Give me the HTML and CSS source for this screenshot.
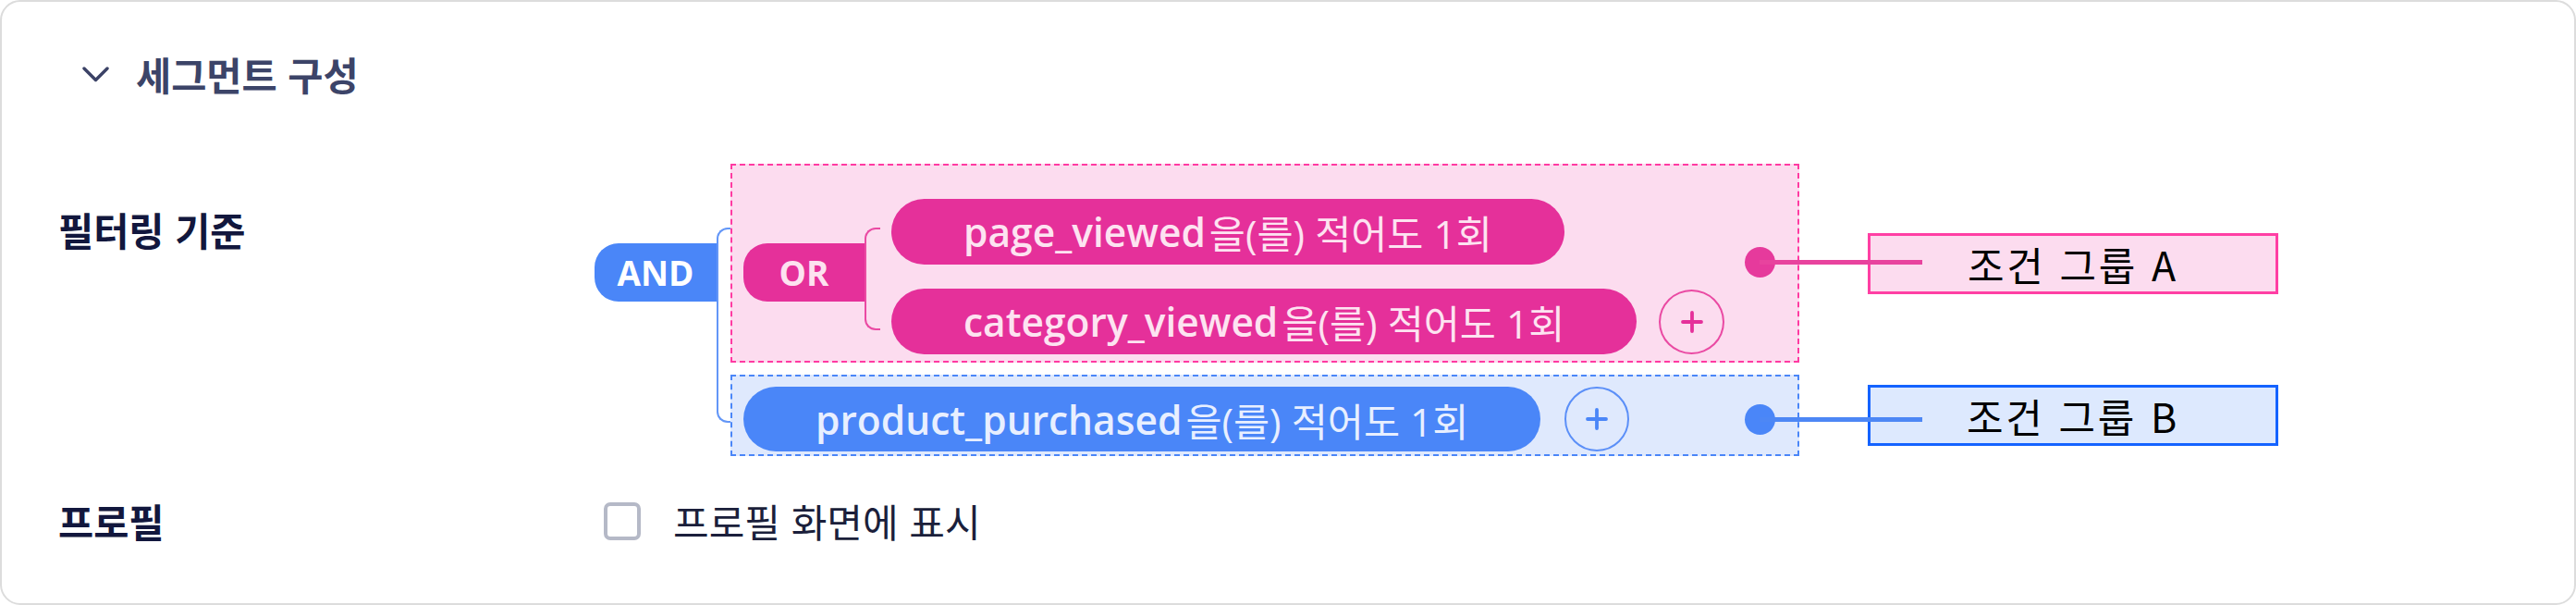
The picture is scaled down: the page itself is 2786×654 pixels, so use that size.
FILE: index.html
```html
<!DOCTYPE html>
<html lang="ko">
<head>
<meta charset="utf-8">
<title>세그먼트 구성</title>
<link rel="stylesheet" href="styles.css">
</head>
<body>
<section class="card">
  <header class="header">
    <svg class="chevron" width="29" height="17" viewBox="0 0 29 17"><polyline points="2,2 14.5,14.5 27,2" fill="none" stroke="#3b4266" stroke-width="3.4" stroke-linecap="round" stroke-linejoin="round"/></svg>
    <h2 class="title">세그먼트 구성</h2>
  </header>

  <div class="row filter-row">
    <div class="label filter-label">필터링 기준</div>
    <div class="diagram">
      <div class="op op-and">AND</div>
      <div class="bracket bracket-and"></div>
      <div class="groups">
        <div class="group-row">
          <div class="group group-a">
            <div class="op op-or">OR</div>
            <div class="bracket bracket-or"></div>
            <div class="pills">
              <div class="pill-row"><div class="pill pill-pink"><span class="ev">page_viewed</span><span class="cond">을(를) 적어도 1회</span></div></div>
              <div class="pill-row"><div class="pill pill-pink"><span class="ev">category_viewed</span><span class="cond">을(를) 적어도 1회</span></div>
                <div class="add add-pink"><svg width="24" height="24" viewBox="0 0 24 24"><path d="M12 2v20M2 12h20" stroke="currentColor" stroke-width="3.8" stroke-linecap="round"/></svg></div>
              </div>
            </div>
            <div class="dot dot-a"></div>
          </div>
          <div class="tag tag-a">조건 그룹 A</div>
        </div>
        <div class="group-row">
          <div class="group group-b">
            <div class="pill pill-blue"><span class="ev">product_purchased</span><span class="cond">을(를) 적어도 1회</span></div>
            <div class="add add-blue"><svg width="24" height="24" viewBox="0 0 24 24"><path d="M12 2v20M2 12h20" stroke="currentColor" stroke-width="3.8" stroke-linecap="round"/></svg></div>
            <div class="dot dot-b"></div>
          </div>
          <div class="tag tag-b">조건 그룹 B</div>
        </div>
      </div>
    </div>
  </div>

  <div class="row profile-row">
    <div class="label">프로필</div>
    <label class="check"><span class="box"></span><span class="check-text">프로필 화면에 표시</span></label>
  </div>
</section>
</body>
</html>
```

FILE: styles.css
```css
* { box-sizing: border-box; }
html, body { margin: 0; padding: 0; background: #ffffff; }
body { font-family: "Open Sans", "Noto Sans CJK KR", sans-serif; }

.card {
  width: 2786px;
  height: 654px;
  border: 2px solid #dcdcdc;
  border-radius: 22px;
  background: #fff;
  padding-left: 61px;
  overflow: hidden;
}

.header {
  height: 156px;
  display: flex;
  align-items: center;
  padding-left: 26px;
  gap: 29px;
}
.chevron { display: block; }
.title {
  margin: 0;
  font-family: "Noto Sans CJK KR", sans-serif;
  font-size: 41.5px;
  font-weight: 600;
  color: #3c4468;
  line-height: 56px;
}

.row { display: flex; }
.label {
  width: 580px;
  flex: none;
  font-family: "Noto Sans CJK KR", sans-serif;
  font-size: 41.5px;
  font-weight: 700;
  line-height: 56px;
  color: #12173d;
}
.filter-row { margin-top: 19px; }
.filter-label { margin-top: 43px; }

.diagram { display: flex; align-items: flex-start; }

.op {
  flex: none;
  height: 63px;
  width: 132px;
  display: flex;
  align-items: center;
  justify-content: center;
  font-family: "Open Sans", sans-serif;
  font-weight: 700;
  font-size: 37px;
  border-radius: 26px 0 0 26px;
}
.op-and { background: #4a86f8; color: #ffffff; margin-top: 86px; }
.op-or { background: #e5309a; color: #fde2f0; margin-top: 48px; width: 131px; }

.bracket {
  flex: none;
  border: 2px solid;
  border-right: none;
  border-radius: 12px 0 0 12px;
}
.bracket-and { width: 15px; height: 211px; margin-top: 69px; border-color: #6396f7; }
.bracket-or { width: 17px; height: 111px; margin-top: 31px; border-color: #ea4aa3; }

.groups { display: flex; flex-direction: column; gap: 13px; }
.group-row { display: flex; align-items: center; }

.group {
  width: 1156px;
  border: 2px dashed;
  display: flex;
  align-items: flex-start;
  padding-left: 12px;
  padding-right: 24px;
}
.group-a { height: 215px; padding-top: 36px; background: #fcdcef; border-color: #ff3aa2; }
.group-b { height: 88px; padding-top: 8px; align-items: center; background: #dfe9fd; border-color: #4a86f8; }

.pills { margin-left: 12px; display: flex; flex-direction: column; gap: 26px; }
.pill-row { display: flex; align-items: center; }

.pill {
  flex: none;
  height: 71px;
  border-radius: 36px;
  padding: 0 78px;
  display: flex;
  align-items: center;
  font-size: 42.5px;
  white-space: nowrap;
}
.pill-pink { background: #e5309a; color: #fde3f1; }
.pill-blue { background: #4a86f8; color: #e8efff; height: 70px; }
.ev { font-family: "Open Sans", sans-serif; font-weight: 600; }
.cond { font-family: "Open Sans", "Noto Sans CJK KR", sans-serif; font-weight: 400; margin-left: 4px; }

.add {
  flex: none;
  width: 71px;
  height: 70px;
  border-radius: 50%;
  border: 2px solid;
  display: flex;
  align-items: center;
  justify-content: center;
}
.add svg { display: block; }
.add-pink { margin-left: 24px; border-color: #ea4aa3; color: #e5309a; }
.add-blue { margin-left: 26px; border-color: #5b8ff8; color: #4a86f8; width: 70px; }

.dot {
  flex: none;
  width: 33px;
  height: 33px;
  border-radius: 50%;
  margin-left: auto;
  position: relative;
  z-index: 2;
}
.dot::after {
  content: "";
  position: absolute;
  left: 16px;
  top: 14px;
  width: 176px;
  height: 5px;
}
.dot-a { background: #e63a9c; margin-top: 52px; }
.dot-a::after { background: #e8439e; }
.dot-b { background: #4a86f8; }
.dot-b::after { background: #4d87f5; }

.tag {
  flex: none;
  margin-left: 74px;
  width: 444px;
  height: 66px;
  border: 3px solid;
  display: flex;
  align-items: center;
  justify-content: center;
  font-family: "Noto Sans CJK KR", sans-serif;
  font-size: 43px;
  letter-spacing: 2.8px;
  color: #000;
}
.tag-a { background: #fcdcef; border-color: #ff3fa4; }
.tag-b { background: #dde9fe; border-color: #1463ff; }

.profile-row { margin-top: 42px; align-items: center; }
.check { display: flex; align-items: center; margin-left: 10px; }
.box {
  width: 40px;
  height: 41px;
  border: 4px solid #b5b9c7;
  border-radius: 7px;
  background: #fff;
}
.check-text {
  margin-left: 35px;
  font-family: "Noto Sans CJK KR", sans-serif;
  font-size: 42px;
  letter-spacing: 0;
  line-height: 56px;
  color: #1b1f3b;
}
```
